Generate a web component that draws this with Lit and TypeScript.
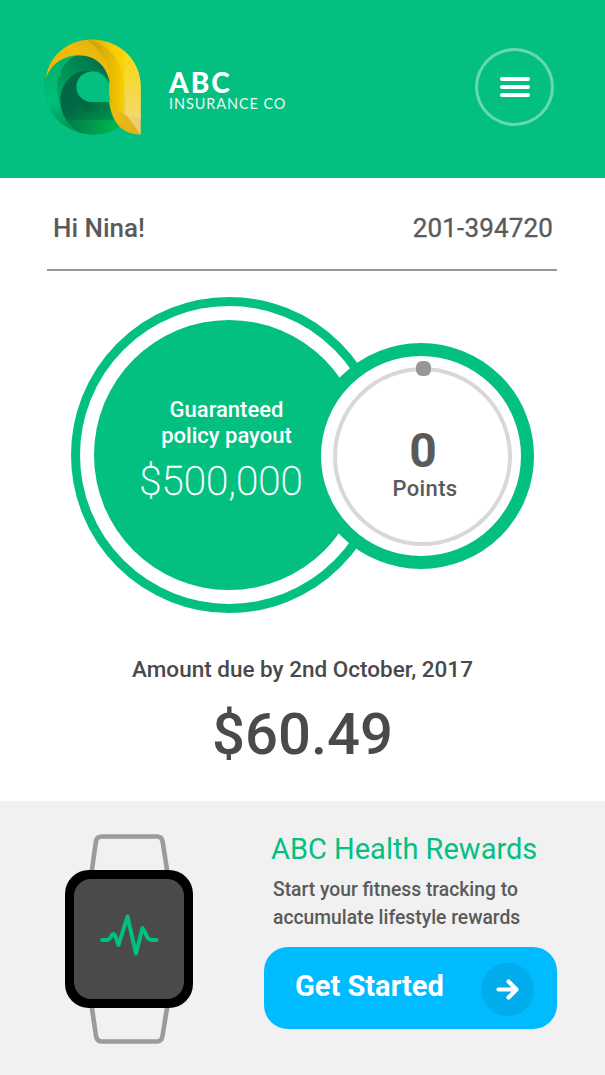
import { LitElement, html, css } from "lit";
import { customElement } from "lit/decorators.js";

@customElement("brand-logo")
class BrandLogo extends LitElement {
  static styles = css`
    :host { display: block; width: 130px; height: 125px; }
    svg { display: block; }
  `;
  render() {
    return html`<svg width="130" height="125" viewBox="0 0 390 375" aria-hidden="true">
      <defs>
        <linearGradient id="outer" x1="0.1" y1="0" x2="0.7" y2="1">
          <stop offset="0" stop-color="#00ad6c" /><stop offset=".45" stop-color="#00bf7a" /><stop offset=".7" stop-color="#009c5c" /><stop offset="1" stop-color="#009b50" />
        </linearGradient>
        <linearGradient id="mid" x1="0" y1="0.7" x2="0.9" y2="0">
          <stop offset="0" stop-color="#00a45f" /><stop offset="1" stop-color="#006b47" />
        </linearGradient>
        <linearGradient id="inner" x1="0" y1="0" x2="0.8" y2="1">
          <stop offset="0" stop-color="#006344" /><stop offset=".45" stop-color="#006a44" /><stop offset="1" stop-color="#009a4e" />
        </linearGradient>
        <linearGradient id="foot" x1="0" y1="0" x2="1" y2="0">
          <stop offset="0" stop-color="#007c4a" /><stop offset="1" stop-color="#00b950" />
        </linearGradient>
        <linearGradient id="bar" x1="0" y1="0" x2="1" y2="0">
          <stop offset="0" stop-color="#005b3c" /><stop offset="1" stop-color="#008349" />
        </linearGradient>
        <linearGradient id="arch" x1="0" y1="1" x2="1" y2="0">
          <stop offset="0" stop-color="#e8b70e" /><stop offset=".6" stop-color="#efbc0c" /><stop offset="1" stop-color="#dfae10" />
        </linearGradient>
        <linearGradient id="gold" x1="0" y1="0" x2="1" y2="0">
          <stop offset="0" stop-color="#d9a808" /><stop offset=".55" stop-color="#fbd008" /><stop offset="1" stop-color="#f8d50b" />
        </linearGradient>
        <linearGradient id="stem" x1="0" y1="0" x2="1" y2="0">
          <stop offset="0" stop-color="#c99a08" /><stop offset=".6" stop-color="#e5b604" /><stop offset="1" stop-color="#f9cf00" />
        </linearGradient>
        <linearGradient id="edge" x1="0" y1="0" x2="0" y2="1">
          <stop offset="0" stop-color="#fbd90c" /><stop offset=".5" stop-color="#f4da4e" /><stop offset="1" stop-color="#f1d98c" />
        </linearGradient>
        <linearGradient id="tail" x1="0" y1="0" x2="1" y2="0.4">
          <stop offset="0" stop-color="#edbd12" /><stop offset="1" stop-color="#e3b31a" />
        </linearGradient>
      </defs>
      <path fill="url(#outer)" d="M60 122C80 98 120 84 158 90C205 98 236 132 238 175L232 172C222 150 205 140 187 139A46 46 0 0 0 187 232H240L266 308C240 322 215 329 175 328C105 322 42 264 42 185C42 160 49 137 60 122Z" />
      <path fill="url(#mid)" d="M135 93C190 80 238 125 238 172C222 148 205 139 187 139C150 141 100 180 91 240C70 180 84 120 135 93Z" />
      <path fill="url(#inner)" d="M187 139C130 128 90 178 91 228C92 270 120 312 160 325C200 335 238 320 266 308C248 288 240 265 238 232H186C158 232 139 211 139 186C139 161 158 140 187 139Z" />
      <path fill="url(#bar)" d="M148 213Q165 232 190 232H238Q238 248 242 260H165Q155 240 148 213Z" opacity=".6" />
      <path fill="url(#foot)" d="M111 286H254Q259 298 267 307C240 326 213 330 181 328C150 323 124 307 111 286Z" />
      <path fill="url(#arch)" d="M48 160C55 94 113 43 183 44C225 50 245 105 238 168C230 125 197 91 147 91C99 91 62 120 48 160Z" />
      <path fill="url(#gold)" d="M172 44C262 36 332 103 332 185V280L283 285V205C282 120 240 60 172 44Z" />
      <path fill="url(#stem)" d="M172 44C216 78 238 115 239 168C235 195 238 216 243 238L283 282V183C283 120 245 58 172 44Z" />
      <path fill="url(#edge)" d="M283 78C315 105 332 143 332 184V290L283 280Z" opacity=".8" />
      <path fill="url(#tail)" d="M237 225C253 256 285 276 331 278V329C289 327 246 308 237 225Z" />
      <path fill="#f0d58a" d="M283 262Q304 277 332 276V329Z" opacity=".75" />
    </svg>`;
  }
}

@customElement("health-watch")
class HealthWatch extends LitElement {
  static styles = css`
    :host { display: block; width: 130px; height: 212px; }
    svg { display: block; }
  `;
  render() {
    return html`<svg width="130" height="212" viewBox="0 0 130 212" aria-hidden="true">
      <path d="M27.500 40L32 8Q33 3.500 38 3.500H93Q97.500 3.500 98.500 8L103.500 40V172L98.500 203Q97.500 208.500 93 208.500H38Q33 208.500 32 203L27.500 172Z" fill="#f1f1f1" stroke="#9b9b9b" stroke-width="4.600" />
      <rect x="1" y="37" width="128" height="138" rx="24" fill="#000" />
      <rect x="10" y="46" width="110" height="120" rx="17" fill="#4a4a4a" />
      <path d="M38 107H42.500Q45.500 107 47 103.500Q49.500 98.500 51.500 103.500L54.500 112L63.500 83.500L72 120.500L78.500 95Q81.500 100 83.500 104.500Q85 107 88 107H92.500" fill="none" stroke="#00c081" stroke-width="4" stroke-linecap="round" stroke-linejoin="round" />
    </svg>`;
  }
}

@customElement("app-root")
class AppRoot extends LitElement {
  static styles = css`
    :host { display: block; width: 605px; height: 1075px; background: #fff; font-family: Roboto, sans-serif; color: #5a5a5a; overflow: hidden; }
    * { box-sizing: border-box; }
    .page { display: flex; flex-direction: column; height: 1075px; }
    header { height: 178px; flex: none; background: #03c081; display: flex; align-items: flex-start; padding: 25px 51px 0 30px; }
    .name { margin: 40px auto 0 9px; color: #fff; font-family: Lato, sans-serif; white-space: nowrap; }
    .abc { font-size: 28px; line-height: 34px; font-weight: 900; letter-spacing: 2px; }
    .co { font-size: 14.5px; line-height: 14px; margin-top: -2px; font-weight: 400; letter-spacing: 0.9px; opacity: .9; }
    .menu { margin-top: 23px; width: 79px; height: 78px; padding: 0; border: 3px solid #68d8b2; border-radius: 50%; background: none; display: flex; flex-direction: column; align-items: center; justify-content: center; gap: 4px; }
    .menu i { width: 30px; height: 4px; border-radius: 2px; background: #fff; }
    .who { flex: none; height: 93px; margin: 0 48px 0 47px; padding: 33px 4px 0 6px; border-bottom: 2px solid #979797; display: flex; justify-content: space-between; font-size: 26px; line-height: 34px; font-weight: 500; white-space: nowrap; }
    .num { font-weight: 400; letter-spacing: .15px; -webkit-text-stroke: .35px; }
    .dials { flex: none; height: 342px; padding: 26px 0 0 70.500px; display: flex; align-items: flex-start; }
    .payout { width: 316px; height: 316px; border: 9px solid #03c081; border-radius: 50%; padding: 14px; flex: none; }
    .disc { width: 270px; height: 270px; border-radius: 50%; background: #03c081; color: #fff; display: flex; flex-direction: column; align-items: center; padding-top: 77px; white-space: nowrap; text-align: center; }
    .label { font-size: 22px; line-height: 26px; font-weight: 500; margin-right: 4px; }
    .sum { font-size: 40.5px; line-height: 48px; font-weight: 200; margin: 8px 15px 0 0; -webkit-text-stroke: .3px; }
    .points { position: relative; width: 226px; height: 226px; margin: 46px 0 0 -78.500px; border: 13px solid #03c081; border-radius: 50%; background: #fff; flex: none; padding: 11px 11px 11px 12px; }
    .track { width: 179px; height: 179px; border: 4px solid #d8d8d8; border-radius: 50%; display: flex; flex-direction: column; align-items: center; padding-top: 55px; }
    .dot { position: absolute; left: 95px; top: 5px; width: 15px; height: 15px; border-radius: 6px; background: #979797; }
    .zero { font-size: 48px; line-height: 50px; font-weight: 700; margin-left: 1px; }
    .pts { font-size: 22px; line-height: 26px; font-weight: 500; margin-left: 5px; letter-spacing: .35px; }
    .due { flex: 1; text-align: center; color: #4a4a4a; white-space: nowrap; padding-top: 43px; }
    .when { font-size: 22.5px; line-height: 26px; font-weight: 500; }
    .amount { font-size: 58px; line-height: 68px; font-weight: 500; margin-top: 18px; }
    .promo { flex: none; height: 274px; background: #f1f1f1; display: flex; padding: 32px 48px 0 64px; }
    .copy { margin-left: 70px; width: 293px; }
    h2 { margin: 0 0 0 7px; color: #03c081; font-size: 29px; line-height: 33px; font-weight: 400; white-space: nowrap; }
    p { margin: 10px 0 0 9px; font-size: 19.3px; line-height: 28px; font-weight: 500; white-space: nowrap; }
    .cta { margin-top: 15px; width: 293px; height: 82px; border: 0; border-radius: 24px; background: #00bbff; color: #fff; display: flex; align-items: center; justify-content: space-between; padding: 0 23px 0 31px; font: 700 29px/34px Roboto, sans-serif; }
    .cta span { padding-bottom: 4px; white-space: nowrap; }
    .go { width: 53px; height: 53px; border-radius: 50%; background: #00aceb; margin-top: 2px; }
    .go svg { display: block; }
  `;
  render() {
    return html`<div class="page">
      <header>
        <brand-logo></brand-logo>
        <div class="name"><div class="abc">ABC</div><div class="co">INSURANCE CO</div></div>
        <button class="menu" aria-label="Menu"><i></i><i></i><i></i></button>
      </header>
      <div class="who"><span class="hi">Hi Nina!</span><span class="num">201-394720</span></div>
      <div class="dials">
        <div class="payout"><div class="disc">
          <div class="label">Guaranteed<br />policy payout</div>
          <div class="sum">$500,000</div>
        </div></div>
        <div class="points"><div class="track"><div class="zero">0</div><div class="pts">Points</div></div><div class="dot"></div></div>
      </div>
      <div class="due"><div class="when">Amount due by 2nd October, 2017</div><div class="amount">$60.49</div></div>
      <div class="promo">
        <health-watch></health-watch>
        <div class="copy">
          <h2>ABC Health Rewards</h2>
          <p>Start your fitness tracking to<br />accumulate lifestyle rewards</p>
          <button class="cta"><span>Get Started</span><div class="go"><svg width="53" height="53" viewBox="0 0 53 53"><path d="M17.500 26.500H34M27.500 18.500L35.500 26.500L27.500 34.500" fill="none" stroke="#fff" stroke-width="4.200" stroke-linecap="round" stroke-linejoin="round" /></svg></div></button>
        </div>
      </div>
    </div>`;
  }
}
